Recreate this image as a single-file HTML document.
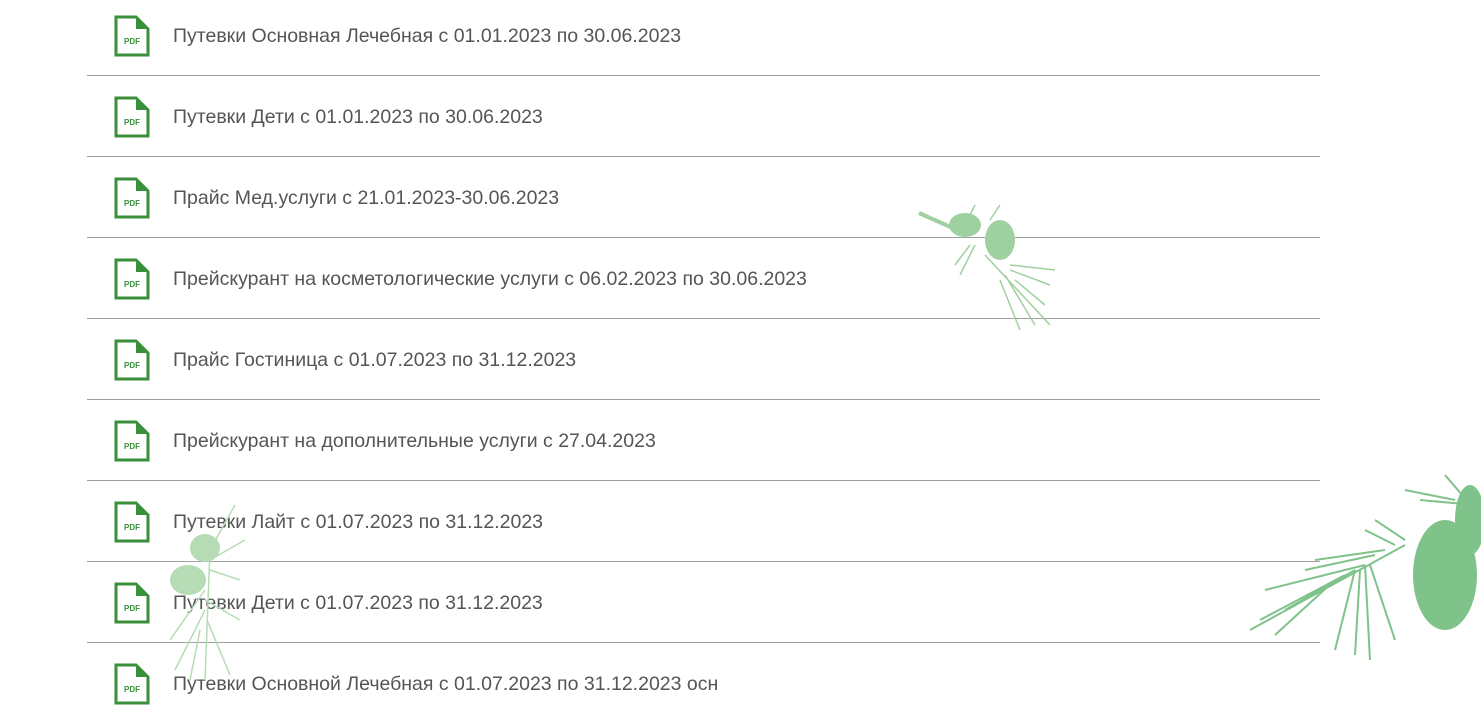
<!DOCTYPE html>
<html><head><meta charset="utf-8"><style>
body{margin:0;width:1481px;height:700px;overflow:hidden;background:#fff;position:relative;font-family:"Liberation Sans","DejaVu Sans",sans-serif}
.row{position:absolute;left:87px;width:1233px;height:81px;border-bottom:1px solid #a0a0a0}
.row svg{position:absolute;left:27px;top:21px}
.row span{position:absolute;left:86px;top:31px;font-size:19.5px;color:#555}
.deco{position:absolute;pointer-events:none}
</style></head><body>
<div class="row" style="top:-6px"><svg width="36" height="42" viewBox="0 0 36 42"><path d="M2 2H22L34 14V40H2Z" fill="none" stroke="#3a8f3a" stroke-width="3"/><path d="M22 2V14H34Z" fill="#3a8f3a"/><text x="18" y="29" font-size="8" font-weight="bold" fill="#3a8f3a" text-anchor="middle" font-family="Liberation Sans">PDF</text></svg><span>Путевки Основная Лечебная с 01.01.2023 по 30.06.2023</span></div>
<div class="row" style="top:75px"><svg width="36" height="42" viewBox="0 0 36 42"><path d="M2 2H22L34 14V40H2Z" fill="none" stroke="#3a8f3a" stroke-width="3"/><path d="M22 2V14H34Z" fill="#3a8f3a"/><text x="18" y="29" font-size="8" font-weight="bold" fill="#3a8f3a" text-anchor="middle" font-family="Liberation Sans">PDF</text></svg><span>Путевки Дети с 01.01.2023 по 30.06.2023</span></div>
<div class="row" style="top:156px"><svg width="36" height="42" viewBox="0 0 36 42"><path d="M2 2H22L34 14V40H2Z" fill="none" stroke="#3a8f3a" stroke-width="3"/><path d="M22 2V14H34Z" fill="#3a8f3a"/><text x="18" y="29" font-size="8" font-weight="bold" fill="#3a8f3a" text-anchor="middle" font-family="Liberation Sans">PDF</text></svg><span>Прайс Мед.услуги с 21.01.2023-30.06.2023</span></div>
<div class="row" style="top:237px"><svg width="36" height="42" viewBox="0 0 36 42"><path d="M2 2H22L34 14V40H2Z" fill="none" stroke="#3a8f3a" stroke-width="3"/><path d="M22 2V14H34Z" fill="#3a8f3a"/><text x="18" y="29" font-size="8" font-weight="bold" fill="#3a8f3a" text-anchor="middle" font-family="Liberation Sans">PDF</text></svg><span>Прейскурант на косметологические услуги с 06.02.2023 по 30.06.2023</span></div>
<div class="row" style="top:318px"><svg width="36" height="42" viewBox="0 0 36 42"><path d="M2 2H22L34 14V40H2Z" fill="none" stroke="#3a8f3a" stroke-width="3"/><path d="M22 2V14H34Z" fill="#3a8f3a"/><text x="18" y="29" font-size="8" font-weight="bold" fill="#3a8f3a" text-anchor="middle" font-family="Liberation Sans">PDF</text></svg><span>Прайс Гостиница с 01.07.2023 по 31.12.2023</span></div>
<div class="row" style="top:399px"><svg width="36" height="42" viewBox="0 0 36 42"><path d="M2 2H22L34 14V40H2Z" fill="none" stroke="#3a8f3a" stroke-width="3"/><path d="M22 2V14H34Z" fill="#3a8f3a"/><text x="18" y="29" font-size="8" font-weight="bold" fill="#3a8f3a" text-anchor="middle" font-family="Liberation Sans">PDF</text></svg><span>Прейскурант на дополнительные услуги с 27.04.2023</span></div>
<div class="row" style="top:480px"><svg width="36" height="42" viewBox="0 0 36 42"><path d="M2 2H22L34 14V40H2Z" fill="none" stroke="#3a8f3a" stroke-width="3"/><path d="M22 2V14H34Z" fill="#3a8f3a"/><text x="18" y="29" font-size="8" font-weight="bold" fill="#3a8f3a" text-anchor="middle" font-family="Liberation Sans">PDF</text></svg><span>Путевки Лайт с 01.07.2023 по 31.12.2023</span></div>
<div class="row" style="top:561px"><svg width="36" height="42" viewBox="0 0 36 42"><path d="M2 2H22L34 14V40H2Z" fill="none" stroke="#3a8f3a" stroke-width="3"/><path d="M22 2V14H34Z" fill="#3a8f3a"/><text x="18" y="29" font-size="8" font-weight="bold" fill="#3a8f3a" text-anchor="middle" font-family="Liberation Sans">PDF</text></svg><span>Путевки Дети с 01.07.2023 по 31.12.2023</span></div>
<div class="row" style="top:642px;border:none"><svg width="36" height="42" viewBox="0 0 36 42"><path d="M2 2H22L34 14V40H2Z" fill="none" stroke="#3a8f3a" stroke-width="3"/><path d="M22 2V14H34Z" fill="#3a8f3a"/><text x="18" y="29" font-size="8" font-weight="bold" fill="#3a8f3a" text-anchor="middle" font-family="Liberation Sans">PDF</text></svg><span>Путевки Основной Лечебная с 01.07.2023 по 31.12.2023 осн</span></div>

<svg class="deco" style="left:915px;top:195px" width="145" height="140" viewBox="0 0 145 140" fill="none" stroke="#9fd0a0" stroke-width="1.5">
<path d="M4 18L40 34" stroke-width="4"/>
<ellipse cx="50" cy="30" rx="16" ry="12" fill="#9fd0a0" stroke="none"/>
<ellipse cx="85" cy="45" rx="15" ry="20" fill="#9fd0a0" stroke="none"/>
<path d="M70 60L135 130M95 70L140 75M95 75L135 90M100 85L130 110M90 80L120 130M85 85L105 135M60 50L45 80M55 50L40 70M60 10L55 20M85 10L75 25"/>
</svg>
<svg class="deco" style="left:155px;top:500px" width="95" height="185" viewBox="0 0 95 185" fill="none" stroke="#b5dcb5" stroke-width="1.5">
<path d="M80 5L55 50L50 180"/>
<ellipse cx="50" cy="48" rx="15" ry="14" fill="#b5dcb5" stroke="none"/>
<ellipse cx="33" cy="80" rx="18" ry="15" fill="#b5dcb5" stroke="none"/>
<path d="M55 60L90 40M55 70L85 80M50 90L15 140M50 100L85 120M50 110L20 170M52 120L75 175M45 130L35 180"/>
</svg>
<svg class="deco" style="left:1245px;top:470px" width="236" height="200" viewBox="0 0 236 200" fill="none" stroke="#7fc28a" stroke-width="2">
<path d="M5 160L160 75M200 5L230 40"/>
<ellipse cx="200" cy="105" rx="32" ry="55" fill="#7fc28a" stroke="none"/>
<ellipse cx="225" cy="50" rx="15" ry="35" fill="#7fc28a" stroke="none"/>
<path d="M120 95L20 120M110 100L40 140M100 105L15 150M90 110L30 165M130 85L60 100M140 80L70 90M150 75L120 60M160 70L130 50M120 95L125 190M115 100L110 185M125 95L150 170M110 100L90 180M175 30L230 35M160 20L210 30"/>
</svg>
</body></html>
